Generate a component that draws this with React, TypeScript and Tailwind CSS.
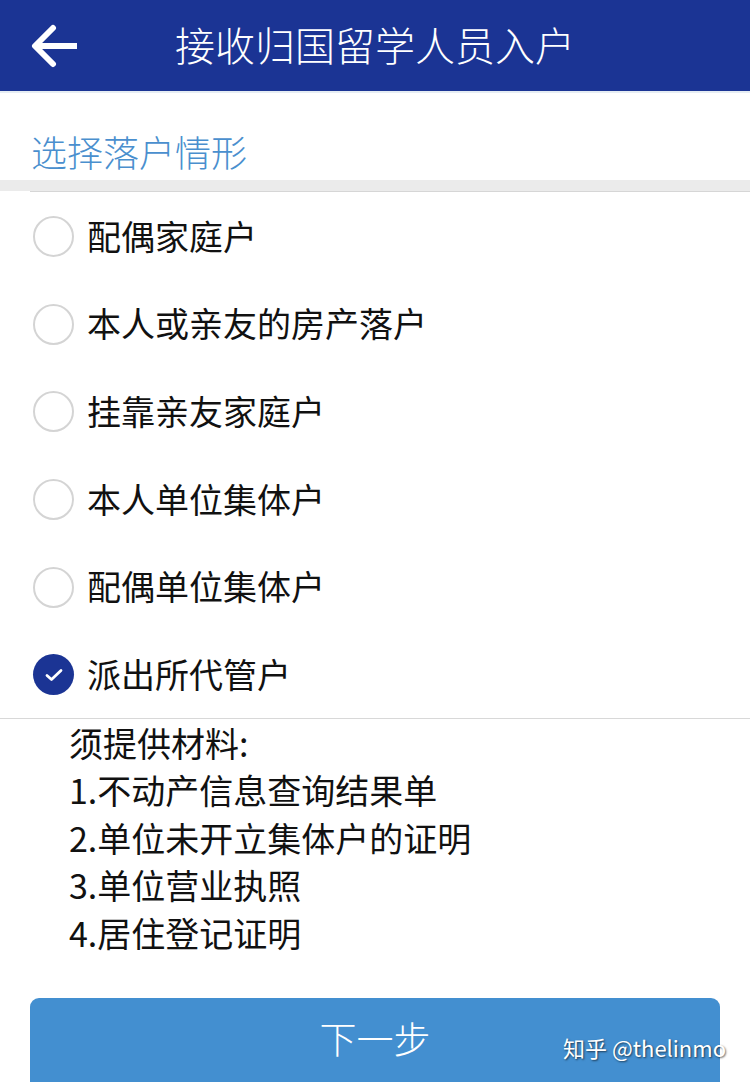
import { useState } from "react"

const options = [
  "配偶家庭户",
  "本人或亲友的房产落户",
  "挂靠亲友家庭户",
  "本人单位集体户",
  "配偶单位集体户",
  "派出所代管户",
]

const materials = [
  "须提供材料:",
  "1.不动产信息查询结果单",
  "2.单位未开立集体户的证明",
  "3.单位营业执照",
  "4.居住登记证明",
]

function BackArrow() {
  return (
    <svg width="50" height="44" viewBox="0 0 50 44" fill="none">
      <path d="M48 22H8" stroke="white" strokeWidth="6" />
      <path d="M24 4L6 22L24 40" stroke="white" strokeWidth="6" strokeLinecap="round" strokeLinejoin="round" />
    </svg>
  )
}

function Radio({ checked }: { checked: boolean }) {
  if (checked) {
    return (
      <div className="w-[41px] h-[41px] shrink-0 rounded-full bg-[#1b3494] flex items-center justify-center">
        <svg width="26" height="26" viewBox="0 0 26 26" fill="none">
          <path d="M6 13.5L10.5 17.5L20 8.5" stroke="white" strokeWidth="2.8" strokeLinecap="round" strokeLinejoin="round" />
        </svg>
      </div>
    )
  }
  return <div className="w-[41px] h-[41px] shrink-0 rounded-full border-2 border-[#d4d4d4] bg-white" />
}

export default function App() {
  const [selected, setSelected] = useState(5)

  return (
    <div
      className="w-[750px] h-[1082px] bg-white overflow-hidden relative"
      style={{ fontFamily: '"Noto Sans CJK SC", "Noto Sans", sans-serif' }}
    >
      {/* header */}
      <div className="h-[91px] bg-[#1b3494] flex items-center relative">
        <div className="pl-[29px] pt-[1px]">
          <BackArrow />
        </div>
        <div className="absolute left-0 right-0 top-0 h-[91px] flex items-center justify-center text-white text-[40px] font-light pb-[4px]">
          接收归国留学人员入户
        </div>
      </div>
      <div className="h-[2px] bg-[#e6edf3]" />

      <div className="pl-[31px] pt-[36px] h-[87px] text-[#4a8fce] text-[36px] leading-[45px] font-light">
        选择落户情形
      </div>
      <div className="h-[11px] bg-[#ebebeb]" />
      <div className="ml-[30px] h-[1px] bg-[#d6d6d6]" />

      <div className="pt-[1px]">
        {options.map((o, i) => (
          <div
            key={o}
            className="h-[87.6px] flex items-center pl-[33px] gap-[13px] cursor-pointer"
            onClick={() => setSelected(i)}
          >
            <Radio checked={selected === i} />
            <span className="text-[34px] text-[#111] leading-none pb-[2px]">{o}</span>
          </div>
        ))}
      </div>

      <div className="h-[1px] bg-[#d8d8d8] mt-[-1px]" />

      <div className="pl-[69px] pt-0">
        {materials.map((m) => (
          <div key={m} className="text-[34px] leading-[47.5px] text-[#111]">
            {m}
          </div>
        ))}
      </div>

      <div className="px-[30px] pt-[42px]">
        <button className="w-full h-[110px] rounded-[9px] bg-[#438fd0] text-white text-[37px] font-light flex justify-center pt-[13px]">
          下一步
        </button>
      </div>

      <div
        className="absolute left-[563px] top-[1031px] text-white text-[22px] [text-shadow:1px_1px_2px_rgba(0,0,0,0.6)]"
      >
        知乎 @thelinmo
      </div>
    </div>
  )
}
